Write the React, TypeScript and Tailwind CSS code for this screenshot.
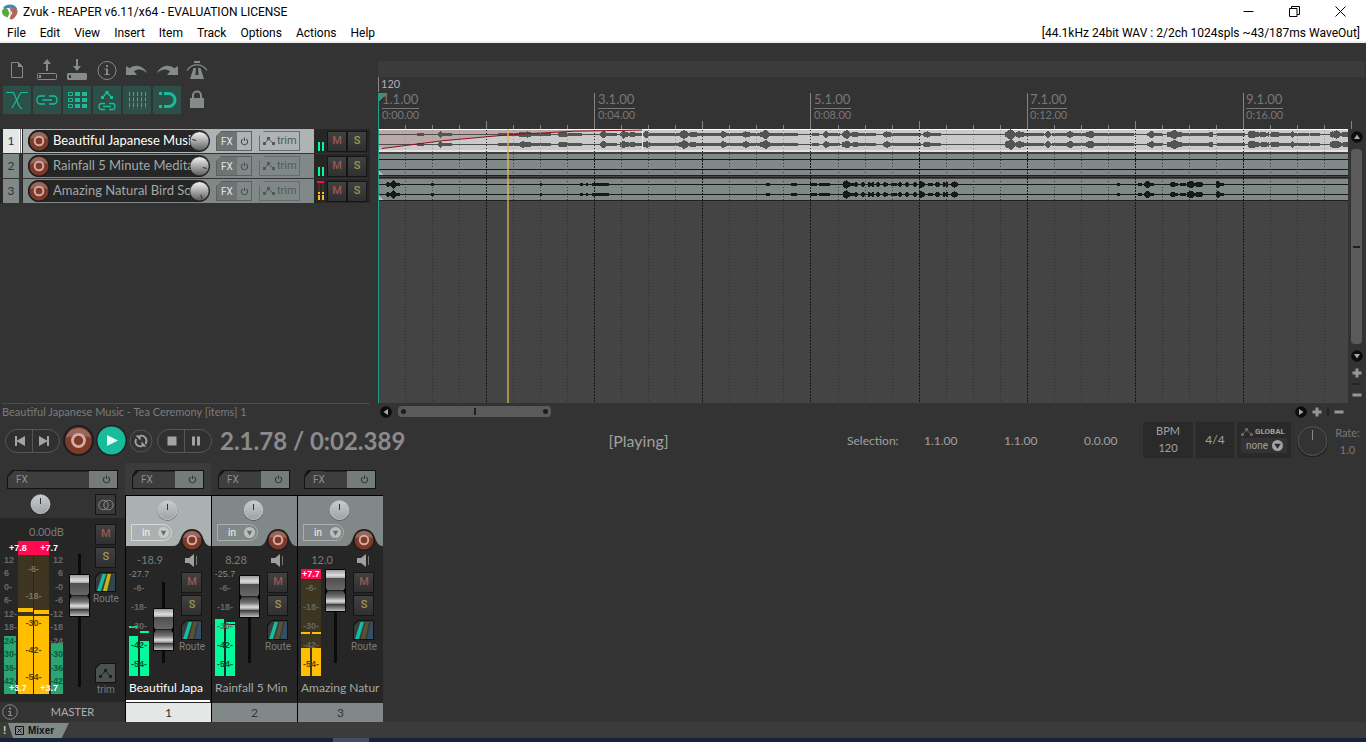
import { useState } from "react";
import type { ReactNode } from "react";

type Blob = [start: number, end: number, amp: number];

const MUSIC: Blob[] = [
  [417, 423, 1], [438, 442, 3], [442, 451, 1.5], [498, 517, 1.5], [518, 532, 3], [532, 550, 1],
  [558, 567, 3], [567, 581, 1], [600, 607, 3], [607, 616, 1.5], [620, 626, 4], [626, 634, 2],
  [634, 641, 1], [642, 650, 3], [650, 678, 1], [679, 688, 4], [688, 699, 2.5], [700, 719, 1.5],
  [720, 727, 3], [728, 741, 1], [742, 750, 3], [750, 759, 1.5], [760, 770, 4], [770, 797, 1.5],
  [812, 818, 1], [823, 829, 3], [829, 839, 1.5], [842, 850, 4], [850, 860, 2.5], [860, 875, 1],
  [883, 891, 3], [891, 920, 1], [923, 930, 3], [930, 940, 1.5], [1005, 1015, 5], [1015, 1025, 3],
  [1025, 1043, 1.5], [1045, 1050, 3], [1052, 1064, 1], [1065, 1074, 3], [1075, 1085, 1],
  [1086, 1094, 4], [1094, 1119, 1.5], [1120, 1133, 1], [1147, 1155, 3], [1155, 1162, 1],
  [1167, 1182, 4], [1182, 1208, 1.5], [1209, 1212, 2], [1217, 1244, 1], [1248, 1256, 4],
  [1256, 1268, 2], [1270, 1279, 3], [1279, 1289, 1.5], [1290, 1294, 3], [1294, 1308, 1],
  [1310, 1319, 1.5], [1330, 1340, 4], [1340, 1348, 2],
];

const BIRDS: Blob[] = [
  [386, 390, 2.5], [391, 396, 4], [396, 399, 1.5], [431, 433, 1.5], [540, 541, 1], [580, 582, 1],
  [586, 587, 1], [592, 597, 1.5], [598, 608, 1.5], [766, 769, 1.5], [791, 796, 1.5], [810, 816, 1.5],
  [819, 829, 1.5], [843, 850, 4], [851, 853, 1.5], [854, 857, 3], [861, 864, 2.5], [868, 873, 2],
  [876, 879, 3], [883, 887, 2.5], [891, 896, 1.5], [898, 901, 2.5], [905, 908, 2.5], [913, 916, 2.5],
  [919, 924, 3.5], [928, 932, 1.5], [935, 939, 3], [943, 947, 2], [951, 957, 3], [1117, 1119, 1],
  [1138, 1141, 1], [1144, 1150, 4], [1151, 1153, 1.5], [1170, 1177, 2.5], [1180, 1185, 1.5],
  [1187, 1194, 4], [1195, 1202, 3], [1216, 1220, 4], [1221, 1223, 1.5],
];

const ORIGIN = 378;

/** Builds one filled waveform; the amplitude swells and decays within each blob. */
function wave(blobs: Blob[], y: number, seed: number) {
  let d = "";
  for (const [a, b, amp] of blobs) {
    const n = b - a;
    for (let x = a; x <= b; x++) {
      const t = n ? (x - a) / n : 0.5;
      const env = amp >= 2.5 ? Math.max(0.35, Math.sin(Math.PI * (0.15 + 0.75 * t))) : 1;
      const noise = 0.65 + 0.3 * Math.abs(Math.sin(x * 12.9898 + seed));
      const h = Math.max(1, Math.round(amp * env * noise));
      d += `M${x - ORIGIN} ${y - h}h1v${h * 2 + 1}h-1z`;
    }
  }
  return d;
}

const LINES = Array.from({ length: 110 }, (_, i) => ({ i, x: Math.round(i * 27.03) }));

/* ---------- toolbar ---------- */

const tools: { label: string; on?: boolean; icon: ReactNode }[] = [
  { label: "New project", icon: (<><path d="M8.500 6.500h7l4 4v11h-11z" fill="none" stroke="currentColor" /><path d="M15 6l5 5h-5z" /></>) },
  { label: "Open project", icon: (<><path d="M14 3l4 5h-3v7h-2V8h-3z" /><rect x="4.500" y="17.500" width="19" height="6" rx="1" fill="none" stroke="currentColor" /><rect x="6" y="19" width="2" height="3" /></>) },
  { label: "Save project", icon: (<><path d="M14 15l4-5h-3V3h-2v7h-3z" /><path d="M5 17h18l1 1v5l-1 1H5l-1-1v-5zM6 19v3h2v-3z" fillRule="evenodd" /></>) },
  { label: "Project settings", icon: (<><circle cx="14" cy="14.500" r="9" fill="none" stroke="currentColor" /><path d="M13 9h2v2h-2zM11.500 12.500H15V18h2v1h-5.500v-1H13v-4.500h-1.500z" /></>) },
  { label: "Undo", icon: <path d="M3 10l3.500 2.200C12 8 20 9 24 17c-5-4-9.500-4.500-13-1.500L14 19H3z" /> },
  { label: "Redo", icon: <path d="M25 10l-3.500 2.200C16 8 8 9 4 17c5-4 9.500-4.500 13-1.500L14 19h11z" /> },
  { label: "Metronome", icon: (<><path d="M11 5h6v2h-6z" /><path d="M4 14.500C9 7 19 7 24 14.500" fill="none" stroke="currentColor" strokeWidth="1.300" /><path d="M10.500 12h2.500l-.5 7h3l-.5-7h2.500L21 23H7z" /></>) },
  { label: "Auto-crossfade", on: true, icon: <path d="M3 6.500h7c3 2 4 14 9 16.500M25 6.500h-7L9 22" fill="none" stroke="currentColor" strokeWidth="1.200" /> },
  { label: "Item grouping", on: true, icon: <path d="M12 10H7a3 4 0 0 0 0 8h5M16 10h5a3 4 0 0 1 0 8h-5M9 14h10" fill="none" stroke="currentColor" strokeWidth="1.400" /> },
  { label: "Ripple editing", on: true, icon: (<><path d="M5.500 6.500h4v3h-4zM5.500 12.500h4v3h-4zM5.500 18.500h4v3h-4z" fill="none" stroke="currentColor" /><path d="M12 6h5v4h-5zM19 6h5v4h-5zM12 12h5v4h-5zM19 12h5v4h-5zM12 18h5v4h-5zM19 18h5v4h-5z" /></>) },
  { label: "Envelope follow", on: true, icon: (<><path d="M9 12l5-5.500L19 12" fill="none" stroke="currentColor" strokeWidth="1.300" /><path d="M12.500 5h3v3h-3zM8 10h3v3H8zM17 10h3v3h-3z" /><path d="M12 17.500H8.500a2.500 3 0 0 0 0 6H12M16 17.500h3.500a2.500 3 0 0 1 0 6H16M10 20.500h8" fill="none" stroke="currentColor" strokeWidth="1.300" /></>) },
  { label: "Grid lines", on: true, icon: <path d="M6.500 6v17M10.500 6v17M14.500 6v17M18.500 6v17M22.500 6v17" fill="none" stroke="currentColor" strokeDasharray="4 1.500" /> },
  { label: "Snapping", on: true, icon: (<><path d="M6 6h3v3H6zM6 19h3v3H6z" /><path d="M11 7.500h4.500a6.500 6.500 0 0 1 0 13H11" fill="none" stroke="currentColor" strokeWidth="3" /></>) },
  { label: "Locking", icon: (<><path d="M7 12h14v10H7z" /><path d="M10 12V9.500a4 4 0 0 1 8 0V12" fill="none" stroke="currentColor" strokeWidth="2" /></>) },
];

function Toolbar() {
  return (
    <div className="grid w-fit grid-cols-7 gap-[2px] pt-[13px] pl-[3px]">
      {tools.map((t) => (
        <button key={t.label} aria-label={t.label} aria-pressed={!!t.on} className={t.on ? "size-[28px] bg-[#2c5047] text-[#18bc9a]" : "size-[28px] text-[#848b89]"}>
          <svg viewBox="0 0 28 28" className="size-full" fill="currentColor">{t.icon}</svg>
        </button>
      ))}
    </div>
  );
}

/* ---------- shared controls ---------- */

function PowerIcon() {
  return (
    <svg viewBox="0 0 10 10" className="size-[9px]" fill="none" stroke="currentColor" strokeWidth="1.200">
      <path d="M3 2.300a3.500 3.500 0 1 0 4 0M5 .5v4" />
    </svg>
  );
}

function EnvIcon() {
  return (
    <svg viewBox="0 0 12 8" className="h-[8px] w-[12px]" fill="currentColor">
      <path d="M1.500 6.500L5.500 2l5 4.500" fill="none" stroke="currentColor" />
      <path d="M0 5h3v3H0zM4 0h3v3H4zM9 5h3v3H9z" />
    </svg>
  );
}

function RecordButton({ size, label }: { size: string; label: string }) {
  return (
    <button aria-label={label} className={`${size} block shrink-0 rounded-full`}>
      <svg viewBox="0 0 22 22" className="size-full">
        <circle cx="11" cy="11" r="11" fill="#1d1d1d" />
        <circle cx="11" cy="11" r="9.500" fill="#7d3a2a" />
        <path d="M2 9a9.300 9.300 0 0 1 18 0Q11 6 2 9z" fill="#95685b" />
        <circle cx="11" cy="11" r="4.300" fill="none" stroke="#d0aca3" strokeWidth="2" />
      </svg>
    </button>
  );
}

function Knob({ label, angle, shiny, id }: { label: string; angle: number; shiny?: boolean; id: string }) {
  return (
    <label className="relative block size-[21px] shrink-0">
      <svg viewBox="0 0 21 21" className="size-full">
        <defs>
          <linearGradient id={id} x1="0" x2="0" y1="0" y2="1">
            <stop offset="0" stopColor={shiny ? "#f5f5f5" : "#c9cccc"} />
            <stop offset="1" stopColor={shiny ? "#5c5c5c" : "#9ea2a2"} />
          </linearGradient>
        </defs>
        <circle cx="10.500" cy="11" r="10" fill="#000" opacity=".35" />
        <circle cx="10.500" cy="10.200" r="9.500" fill={`url(#${id})`} stroke={shiny ? "#333" : "#cfd2d2"} strokeWidth=".7" />
        <path d={shiny ? "M10.500 7V3" : "M10.500 10V4"} stroke="#333" transform={`rotate(${angle} 10.500 10.500)`} />
      </svg>
      <input type="range" aria-label={label} className="absolute inset-0 size-full opacity-0" />
    </label>
  );
}

function MuteSolo({ kind, track, small }: { kind: "M" | "S"; track: string; small?: boolean }) {
  return (
    <button
      aria-label={`${kind === "M" ? "Mute" : "Solo"} ${track}`}
      className={`${small ? "h-[21px] w-[20px]" : "size-[21px]"} ${kind === "M" ? "text-[#9b5750]" : "text-[#9b9850]"} flex items-center justify-center border border-[#151515] bg-[#3a3a3a] bg-linear-to-b from-[#414141] to-[#303030] font-[Roboto,sans-serif] text-[11px] font-medium`}
    >
      {kind}
    </button>
  );
}

function MixerFx({ name }: { name: string }) {
  return (
    <div className="relative flex h-[19px] items-stretch">
      <svg className="absolute inset-0 size-full" preserveAspectRatio="none" viewBox="0 0 100 19">
        <path d="M0 19V6L5 0H100V19z" fill="#131313" />
      </svg>
      <button aria-label={`Effects for ${name}`} className="relative my-px ml-px flex-1 bg-[#3e3e3e] pl-[8px] text-left font-[Roboto,sans-serif] text-[10px] text-[#89908e] [clip-path:polygon(6px_0,100%_0,100%_100%,0_100%,0_6px)]">
        FX
        <i className="absolute top-0 right-0 left-[18px] h-px bg-[#262626]" />
      </button>
      <button aria-label={`Bypass effects for ${name}`} className="relative my-px mr-px flex w-[28px] items-center justify-center bg-[#737c7b] pl-[7px] text-[#2f3534]">
        <PowerIcon />
      </button>
    </div>
  );
}

function RouteButton({ name, bright }: { name: string; bright?: boolean }) {
  return (
    <button aria-label={`Routing for ${name}`} className="flex flex-col items-center">
      <svg viewBox="0 0 21 20" className="h-[20px] w-[21px]">
        <path d="M0 20V5l5-5h16v20z" fill="#111" />
        <path d="M1 19V5.500L5.500 1H20v18z" fill="#373c3c" />
        <path d="M2 19L7.500 2h3.500L6 19z" fill="#17bda0" />
        <path d="M8 19L12.500 2H16l-4 17z" fill={bright ? "#c7b414" : "#5a5233"} />
        <path d="M14 19l4-17h2v17z" fill={bright ? "#2e4650" : "#345064"} />
      </svg>
      <span className="font-[Roboto,sans-serif] text-[10px] leading-[14px] text-[#7c7c7c]">Route</span>
    </button>
  );
}

function FaderCap({ id }: { id: string }) {
  return (
    <svg viewBox="0 0 21 43" className="h-[43px] w-[21px]">
      <defs>
        <linearGradient id={`${id}a`} x1="0" x2="0" y1="0" y2="1">
          <stop offset="0" stopColor="#999" /><stop offset=".25" stopColor="#ddd" /><stop offset=".36" stopColor="#b0b0b0" />
          <stop offset=".4" stopColor="#505050" /><stop offset="1" stopColor="#6a6a6a" />
        </linearGradient>
        <linearGradient id={`${id}b`} x1="0" x2="0" y1="0" y2="1">
          <stop offset="0" stopColor="#3f3f3f" /><stop offset=".3" stopColor="#777" /><stop offset=".5" stopColor="#dedede" />
          <stop offset=".62" stopColor="#999" /><stop offset=".66" stopColor="#3a3a3a" /><stop offset="1" stopColor="#bbb" />
        </linearGradient>
      </defs>
      <rect width="21" height="43" rx="1.500" fill="#050505" />
      <path d="M1 1h19v18l-2 3H3l-2-3z" fill={`url(#${id}a)`} />
      <path d="M1 25l2-3h15l2 3v17H1z" fill={`url(#${id}b)`} />
      <path d="M2 21.500h17" stroke="#222" />
    </svg>
  );
}

function Fader({ name, top, lineTop, lineHeight, id }: { name: string; top: number; lineTop: number; lineHeight: number; id: string }) {
  return (
    <label className="relative block w-[21px] self-stretch">
      <i className="absolute left-[9px] w-[3px] bg-[#0b0b0b]" style={{ top: lineTop, height: lineHeight }} />
      <span className="absolute left-0" style={{ top }}><FaderCap id={id} /></span>
      <input type="range" aria-label={`Volume of ${name}`} className="absolute inset-0 size-full opacity-0" />
    </label>
  );
}

/* ---------- track control panel ---------- */

const tracks = [
  { name: "Beautiful Japanese Musi", short: "Beautiful Japa", volume: "-18.9", peak: "-27.7", fader: 40, knob: 285, bars: [68, 73], holds: [58, 63], clip: false },
  { name: "Rainfall 5 Minute Medita", short: "Rainfall 5 Min", volume: "8.28", peak: "-25.7", fader: 7, knob: 105, bars: [51, 57], holds: [51, 54], clip: false },
  { name: "Amazing Natural Bird So", short: "Amazing Natur", volume: "12.0", peak: "+7.7", fader: 1, knob: 160, bars: [80, 80], holds: [64, 64], clip: true },
];

function TrackRow({ index, selected, onSelect }: { index: number; selected: boolean; onSelect: () => void }) {
  const t = tracks[index];
  return (
    <div className="flex h-[24px] w-[370px] bg-[#262626] pl-[3px]">
      <button onClick={onSelect} aria-label={`Select track ${index + 1}`} className={`${selected ? "bg-[#e5e7e6]" : "bg-[#808987]"} w-[16px] text-[12px] text-[#333]`}>{index + 1}</button>
      <span className={`${selected ? "border-white bg-[#777]" : "border-[#333] bg-[#333]"} mr-px w-[3px] border-r border-l`} />
      <div className={`${selected ? "bg-[#aeb4b3]" : "bg-[#808987]"} flex w-[291px] items-center`}>
        <div className="ml-[5px] flex h-[22px] w-[182px] items-center rounded-full bg-[#262626]">
          <RecordButton size="size-[22px]" label={`Arm ${t.name}`} />
          <span className={`${selected ? "text-white" : "text-[#a2a8a7]"} ml-[3px] w-[136px] text-[13px] whitespace-nowrap`}>{t.name}</span>
          <Knob id={`tk${index}`} label={`Pan of ${t.name}`} angle={t.knob} shiny />
        </div>
        <div className="ml-[6px] flex h-[20px] w-[36px] border border-[#5b6160] [clip-path:polygon(5px_0,100%_0,100%_100%,0_100%,0_5px)]">
          <button aria-label={`Effects for ${t.name}`} className="w-[20px] bg-[#6e7473] font-[Roboto,sans-serif] text-[10px] text-[#e0e3e2]">FX</button>
          <button aria-label={`Bypass effects for ${t.name}`} className="flex flex-1 items-center justify-center text-[#484e4d]"><PowerIcon /></button>
        </div>
        <button className="ml-[7px] flex h-[20px] w-[41px] items-center gap-[2px] border border-[#676d6c] pl-[3px] font-[Roboto,sans-serif] text-[11px] text-[#535958] [clip-path:polygon(5px_0,100%_0,100%_100%,0_100%,0_5px)]">
          <EnvIcon />trim
        </button>
      </div>
      <svg viewBox="0 0 12 24" className="h-[24px] w-[12px]">
        {t.clip ? (
          <>
            <path d="M3 2h7v2H3z" fill="#ff0a50" /><path d="M4 4h2v9H4zM8 4h2v9H8z" fill="#3d3520" />
            <path d="M4 13h2v8H4zM8 13h2v8H8z" fill="#ffbe08" /><path d="M3 15h7v1H3z" fill="#262626" />
          </>
        ) : <path d="M4 13h2v9H4zM8 13h2v9H8z" fill="#00fb98" />}
      </svg>
      <div className="flex items-center pl-px">
        <MuteSolo kind="M" track={t.name} small />
        <MuteSolo kind="S" track={t.name} small />
      </div>
    </div>
  );
}

/* ---------- arrange view ---------- */

function Ruler() {
  const marks = ["1.1.00", "3.1.00", "5.1.00", "7.1.00", "9.1.00"];
  const times = ["0:00.00", "0:04.00", "0:08.00", "0:12.00", "0:16.00"];
  return (
    <div className="relative h-[52px] overflow-hidden">
      <svg className="absolute inset-0 size-full" shapeRendering="crispEdges">
        {LINES.map(({ i, x }) => (
          <rect key={i} x={x} y={i % 8 === 0 ? 16 : i % 4 === 0 ? 44 : 48} width="1" height="36" fill="#858585" />
        ))}
        <rect width="1" height="15" fill="#858585" />
        <path d="M0 16h9L0 25z" fill="#3e8f80" />
        <rect y="16" width="1" height="36" fill="#1f9f87" />
      </svg>
      <div className="relative pl-[3px] text-[11px] leading-[14px] text-[#b0b0b0]">120</div>
      <div className="relative flex">
        {marks.map((m, i) => (
          <div key={m} className="w-[216px] shrink-0 pl-[4px] text-[#777]">
            <div className="w-[37px] border-b border-[#777] text-[13px] leading-[17px]">{m}</div>
            <div className="text-[11px] leading-[12px]">{times[i]}</div>
          </div>
        ))}
      </div>
    </div>
  );
}

function Lanes() {
  return (
    <svg className="size-full" shapeRendering="crispEdges">
      <rect width="100%" height="23" fill="#c9cac9" />
      <rect width="100%" height="1" fill="#fff" />
      <rect y="21" width="100%" height="2" fill="#e2e2e2" />
      <rect y="23" width="100%" height="2" fill="#453f42" />
      <rect y="25" width="100%" height="21" fill="#808987" />
      <rect y="46" width="100%" height="1" fill="#202020" />
      <rect y="48" width="100%" height="1" fill="#202020" />
      <rect y="50" width="100%" height="21" fill="#808987" />
      <rect y="71" width="100%" height="1" fill="#202020" />
      <path d="M0 1V20Q130 1 264 1z" fill="#a87b7b" opacity=".42" shapeRendering="auto" />
      <rect y="5" width="100%" height="1" fill="#4e4e4e" />
      <rect y="15" width="100%" height="1" fill="#4e4e4e" />
      <path d={wave(MUSIC, 5, 1)} fill="#545454" />
      <path d={wave(MUSIC, 15, 7)} fill="#545454" />
      {[30, 40, 55, 65].map((y) => <rect key={y} y={y} width="100%" height="1" fill="#151a19" />)}
      <path d={wave(BIRDS, 55, 2)} fill="#151a19" />
      <path d={wave(BIRDS, 65, 2)} fill="#151a19" />
      {LINES.map(({ i, x }) => (
        <line key={i} x1={x + 0.5} x2={x + 0.5} y1="25" y2="100%" stroke={i % 4 === 0 ? "#151515" : "#262626"} strokeOpacity={i % 4 === 0 ? 1 : 0.75} strokeDasharray={i % 4 === 0 ? "2 1" : "1 2"} />
      ))}
      {LINES.map(({ i, x }) => (
        <line key={i} x1={x + 0.5} x2={x + 0.5} y1="1" y2="23" stroke={i % 4 === 0 ? "#222" : "#999"} strokeDasharray="1 2" />
      ))}
      <path d="M0 20Q130 1 264 1" fill="none" stroke="#8c1016" shapeRendering="auto" />
      <path d="M264.500 2v19" stroke="#e8e8e8" />
      <path d="M0 41l5 5H0zM0 66l5 5H0zM0 16l5 5H0z" fill="#b4bab8" />
      <rect x="129" width="2" height="100%" fill="#e0b94a" opacity=".65" />
      <rect width="1" height="100%" fill="#1f9f87" />
    </svg>
  );
}

function ScrollArrow({ d, label }: { d: string; label: string }) {
  return (
    <button aria-label={label} className="size-[12px] shrink-0">
      <svg viewBox="0 0 12 12" className="size-full"><circle cx="6" cy="6" r="5.800" fill="#0c0c0c" /><path d={d} fill="#aaa" /></svg>
    </button>
  );
}

function Zoom({ plus, label }: { plus?: boolean; label: string }) {
  return (
    <button aria-label={label} className="size-[10px] shrink-0">
      <svg viewBox="0 0 10 10" className="size-full" fill="#969696"><path d="M.5 3.500h9v3h-9z" />{plus && <path d="M3.500.5h3v9h-3z" />}</svg>
    </button>
  );
}

function Arrange() {
  return (
    <section className="flex min-w-0 flex-1 flex-col pt-[18px]">
      <div className="mr-px h-[16px] bg-[#3b3b3b]" />
      <Ruler />
      <div className="flex min-h-[240px] flex-1">
        <div className="relative min-w-0 flex-1 bg-[#444]">
          <div className="absolute inset-0"><Lanes /></div>
        </div>
        <div className="flex w-[18px] flex-col items-center pt-[2px] pr-px">
          <ScrollArrow label="Scroll up" d="M6 3.500l3 4.500H3z" />
          <div className="my-[6px] flex w-[11px] flex-1 items-center justify-center rounded-[4px] bg-[#5a5a5a]"><i className="h-[2px] w-[7px] bg-[#1f1f1f]" /></div>
          <ScrollArrow label="Scroll down" d="M6 8.500l3-4.500H3z" />
          <div className="mt-[6px] flex flex-col items-center gap-[5px] pb-[3px]">
            <Zoom plus label="Zoom in vertically" />
            <i className="h-[2px] w-[9px] bg-[#252525]" />
            <Zoom label="Zoom out vertically" />
          </div>
        </div>
      </div>
      <div className="flex h-[17px] items-center pr-[22px] pl-[2px]">
        <ScrollArrow label="Scroll left" d="M3.500 6L8 3v6z" />
        <div className="ml-[6px] flex h-[11px] w-[153px] items-center justify-between rounded-[4px] bg-[#5a5a5a] px-[3px]">
          <i className="size-[5px] rounded-full bg-[#1c1c1c]" /><i className="h-[7px] w-[2px] bg-[#1f1f1f]" /><i className="size-[5px] rounded-full bg-[#1c1c1c]" />
        </div>
        <div className="ml-auto flex items-center gap-[5px]">
          <ScrollArrow label="Scroll right" d="M8.500 6L4 3v6z" />
          <Zoom plus label="Zoom in" />
          <i className="h-[9px] w-[2px] bg-[#252525]" />
          <Zoom label="Zoom out" />
        </div>
      </div>
    </section>
  );
}

/* ---------- transport ---------- */

function TransportPair({ side, buttons }: { side: string; buttons: { label: string; d: string }[] }) {
  return (
    <div className={`${side} flex h-[24px] w-[55px] overflow-hidden rounded-full border border-[#565656] bg-[#303030]`}>
      {buttons.map((b, i) => (
        <button key={b.label} aria-label={b.label} className={`${i ? "border-l border-[#565656] pr-[3px]" : "pl-[2px]"} flex flex-1 items-center justify-center`}>
          <svg viewBox="0 0 12 12" className="size-[12px]" fill="#a3a3a3"><path d={b.d} /></svg>
        </button>
      ))}
    </div>
  );
}

function Transport() {
  return (
    <section className="flex h-[43px] items-start pt-[2px] pr-[3px] pl-[5px] text-[#a0a0a0]">
      <div className="flex h-[37px] shrink-0 items-center">
        <TransportPair side="" buttons={[{ label: "Go to start", d: "M1 1h2v4.500L11 1v10L3 6.500V11H1z" }, { label: "Go to end", d: "M11 1H9v4.500L1 1v10l8-4.500V11h2z" }]} />
        <div className="ml-[3px]"><RecordButton size="size-[31px]" label="Record" /></div>
        <button aria-label="Play" className="ml-[2px] size-[31px]">
          <svg viewBox="0 0 31 31" className="size-full"><circle cx="15.500" cy="15.500" r="15.500" fill="#222" /><circle cx="15.500" cy="15.500" r="14" fill="#18bc9a" /><path d="M11 10l11 5.500L11 21z" fill="#e6faf5" /></svg>
        </button>
        <button aria-label="Repeat" className="ml-[2px] size-[24px]">
          <svg viewBox="0 0 24 24" className="size-full" fill="none" stroke="#a3a3a3">
            <circle cx="12" cy="12" r="11" stroke="#565656" />
            <path d="M8.500 16.500a5.300 5.300 0 0 1-1.300-6.500M11 6.800a5.300 5.300 0 0 1 5.500 8.200M13 17.200a5.300 5.300 0 0 1-4.500-.7" strokeWidth="1.800" />
            <path d="M6.500 6.500h5v5zM17.500 17.500h-5v-5z" fill="#a3a3a3" stroke="none" />
          </svg>
        </button>
        <TransportPair side="ml-[4px]" buttons={[{ label: "Stop", d: "M1.500 1.500h9v9h-9z" }, { label: "Pause", d: "M2 1.500h3v9H2zM7 1.500h3v9H7z" }]} />
        <output className="ml-[8px] w-[184px] text-[24px] font-bold whitespace-nowrap text-[#8b8b8b]">2.1.78 / 0:02.389</output>
      </div>
      <div className="flex h-[37px] flex-1 items-center justify-center pl-[26px] text-[16px]">[Playing]</div>
      <div className="flex h-[37px] shrink-0 items-center text-[12px]">
        <span className="w-[77px]">Selection:</span>
        <span className="w-[80px]">1.1.00</span>
        <span className="w-[80px]">1.1.00</span>
        <span className="w-[59px]">0.0.00</span>
      </div>
      <div className="flex shrink-0 items-center text-[11px]">
        <div className="flex h-[36px] w-[50px] flex-col items-center justify-between bg-[#2a2a2a] pb-[2px] leading-[17px]"><span>BPM</span><span>120</span></div>
        <div className="ml-[3px] flex h-[36px] w-[38px] items-center justify-center bg-[#2a2a2a] text-[12px]">4/4</div>
        <div className="ml-[3px] flex h-[36px] w-[54px] flex-col bg-[#2a2a2a] px-[4px] pt-[4px]">
          <span className="flex items-center gap-[2px] font-[Roboto,sans-serif] text-[8px] leading-[11px] font-bold"><span className="text-[#666]"><EnvIcon /></span>GLOBAL</span>
          <label className="relative mt-px block bg-[#333]">
            <select aria-label="Global automation override" className="block h-[15px] w-full appearance-none pl-[5px] font-[Roboto,sans-serif] text-[10px]"><option>none</option></select>
            <svg viewBox="0 0 10 10" className="pointer-events-none absolute top-[2px] right-[4px] size-[11px]"><circle cx="5" cy="5" r="5" fill="#a3a3a3" /><path d="M2 3.500h6L5 8z" fill="#2a2a2a" /></svg>
          </label>
        </div>
        <label className="relative ml-[5px] size-[33px]">
          <svg viewBox="0 0 33 33" className="size-full" fill="none"><circle cx="16.500" cy="18" r="14.500" stroke="#222" strokeWidth="2" /><circle cx="16.500" cy="17" r="14.500" fill="#333" stroke="#555" /><path d="M16.500 6v10" stroke="#888" /></svg>
          <input type="range" aria-label="Play rate" className="absolute inset-0 size-full opacity-0" />
        </label>
        <div className="ml-[3px] flex h-[36px] w-[31px] flex-col items-center justify-between pt-[2px] leading-[17px] text-[#777]"><span>Rate:</span><span>1.0</span></div>
      </div>
    </section>
  );
}

/* ---------- mixer ---------- */

const METER_FONT = "font-['Liberation_Sans',sans-serif] font-bold";

function Meter({ t }: { t: (typeof tracks)[number] }) {
  const lit = t.clip ? "bg-[#ffbe00]" : "bg-[#00fb98]";
  return (
    <div className="relative ml-[3px] h-[108px] w-[20px]">
      {t.clip && <i className="absolute inset-x-0 top-[12px] bottom-0 bg-[#3d3520]" />}
      {[0, 1].map((i) => (
        <span key={i}>
          <i className={`${lit} ${i ? "right-0" : "left-0"} absolute bottom-0 w-[9px]`} style={{ top: t.bars[i] }} />
          <i className={`${lit} ${i ? "right-0" : "left-0"} absolute h-[2px] w-[9px]`} style={{ top: t.holds[i] }} />
        </span>
      ))}
      <div className={`${METER_FONT} absolute -inset-x-[4px] top-px flex flex-col items-center text-[9px] text-[#666]`}>
        <span className={`${t.clip ? "bg-[#ff0a50] text-white" : "font-normal text-[#858585]"} h-[10px] w-[20px] text-center leading-[10px]`}><span className="-mx-[4px]">{t.peak}</span></span>
        {[6, 18, 30, 42, 54].map((n) => (
          <span key={n} className={`${n > 40 && !(t.clip && n === 42) ? (t.clip ? "text-[#5e4500]" : "text-[#05503a]") : ""} h-[19px] leading-[19px]`}>-{n}-</span>
        ))}
      </div>
    </div>
  );
}

function Strip({ index, selected }: { index: number; selected: boolean }) {
  const t = tracks[index];
  const tint = selected ? "bg-[#abb1b0]" : "bg-[#808987]";
  return (
    <div className="w-[86px] shrink-0">
      <div className={`${selected ? "bg-[#3b3b3b]" : ""} h-[32px] pt-[7px] pr-[7px] pl-[7px]`}><MixerFx name={t.name} /></div>
      <div className="border-l border-black">
        <div className={`${tint} relative h-[51px] border-t border-black pt-[4px]`}>
          <div className="ml-[31px]"><Knob id={`mk${index}`} label={`Mixer pan of ${t.name}`} angle={0} /></div>
          <label className="relative mt-[3px] ml-[5px] block w-[41px]">
            <select aria-label={`Input of ${t.name}`} className={`${selected ? "border-[#d5d8d7]" : "border-[#a9afae]"} block h-[17px] w-full appearance-none rounded-r-full border pl-[10px] font-[Roboto,sans-serif] text-[10px] text-[#f4f4f4]`}><option>in</option></select>
            <svg viewBox="0 0 10 10" className="pointer-events-none absolute top-[3px] right-[3px] size-[11px]"><circle cx="5" cy="5" r="5" fill="#d2d5d4" opacity=".7" /><path d="M2.500 3.500h5L5 8z" fill="#666c6b" /></svg>
          </label>
          <svg viewBox="0 0 38 20" className="absolute right-0 bottom-0 h-[20px] w-[38px]"><path d="M0 20q5 0 7-6a12.500 12.500 0 0 1 24 0q2 6 7 6z" fill="#262626" /></svg>
          <div className="absolute right-[8px] -bottom-[5px]"><RecordButton size="size-[22px]" label={`Arm ${t.name} in mixer`} /></div>
        </div>
        <div className="flex h-[156px] flex-col bg-[#262626]">
          <div className="flex h-[132px]">
            <div>
              <div className="h-[22px] w-[48px] pt-[3px] text-center text-[11px] leading-[21px] text-[#7a7a7a]">{t.volume}</div>
              <div className="flex h-[108px] gap-[4px]">
                <Meter t={t} />
                <Fader name={t.name} top={t.fader} lineTop={14} lineHeight={81} id={`f${index}`} />
              </div>
            </div>
            <div className="ml-[5px] flex flex-col items-center pt-[8px]">
              <svg viewBox="0 0 13 13" className="h-[13px] w-[13px]" fill="#a0a0a0"><path d="M0 4h4l5-4v13L4 9H0z" /><path d="M11.500 2v9" stroke="#777" /></svg>
              <div className="mt-[5px]"><MuteSolo kind="M" track={`${t.name} strip`} /></div>
              <div className="mt-[2px] mb-[4px]"><MuteSolo kind="S" track={`${t.name} strip`} /></div>
              <RouteButton name={t.name} />
            </div>
          </div>
          <div className={`${selected ? "text-white" : "text-[#a2a8a7]"} ml-[3px] h-[22px] text-[12px] leading-[20px] whitespace-nowrap`}>{t.short}</div>
          <div className={`${selected ? "bg-white" : ""} mr-px h-[2px] shrink-0`} />
        </div>
        <div className={`${selected ? "bg-[#e5e7e6]" : "bg-[#808987]"} h-[20px] border-t border-[#262626] text-center text-[12px] leading-[20px] text-[#333]`}>{index + 1}</div>
      </div>
    </div>
  );
}

function Scale({ right }: { right?: boolean }) {
  const left = ["12", "6", "0-", "6-", "12-", "18-", "24-", "30-", "36-", "42-"];
  const labels = right ? ["12", "6", "-0", "-6", "-12", "-18", "-24", "-30", "-36", "-42"] : left;
  return (
    <div className={`${METER_FONT} ${right ? "right-0 items-end" : "left-0 items-start"} absolute top-[14px] flex h-[131px] flex-col justify-between text-[9px] leading-[10px] text-[#686868]`}>
      {labels.map((l, i) => <span key={l} className={i > (right ? 6 : 5) ? "text-[#0d5a3e]" : ""}>{l}</span>)}
    </div>
  );
}

function Master() {
  return (
    <div className="w-[125px] shrink-0">
      <div className="h-[55px] pt-[7px] pl-[7px]">
        <div className="w-[111px]"><MixerFx name="master" /></div>
        <div className="mt-[5px] flex items-center justify-between pr-[9px] pl-[23px]">
          <Knob id="mmk" label="Master pan" angle={0} />
          <button aria-label="Mono" className="flex size-[21px] items-center justify-center border border-[#151515] bg-[#3a3a3a]">
            <svg viewBox="0 0 16 12" className="h-[12px] w-[16px]" fill="none" stroke="#8a8a8a"><circle cx="5.500" cy="6" r="4.700" /><circle cx="10.500" cy="6" r="4.700" /></svg>
          </button>
        </div>
      </div>
      <div className="flex h-[184px] bg-[#262626]">
        <div className="ml-[4px]">
          <div className="h-[23px] pt-[3px] pl-[25px] text-[11px] leading-[21px] text-[#7a7a7a]">0.00dB</div>
          <div className="relative h-[153px] w-[59px]">
            <i className="absolute top-[95px] bottom-0 left-0 w-[12px] bg-[#2ba673]" />
            <i className="absolute top-[102px] right-0 bottom-0 w-[12px] bg-[#2ba673]" />
            <i className="absolute top-0 bottom-0 left-[14px] w-[31px] bg-[#3d3520]" />
            <i className="absolute top-0 left-[14px] h-[14px] w-[31px] bg-[#ff0a50]" />
            <i className="absolute top-[67px] left-[14px] h-[4px] w-[15px] bg-[#ffbe00]" />
            <i className="absolute top-[69px] left-[30px] h-[4px] w-[15px] bg-[#ffbe00]" />
            <i className="absolute top-[75px] bottom-0 left-[14px] w-[31px] bg-[#ffbe00]" />
            <i className="absolute top-[14px] bottom-0 left-[29px] w-px bg-[#262626]" />
            <Scale /><Scale right />
            <div className={`${METER_FONT} absolute top-[15px] left-[14px] flex w-[31px] flex-col items-center text-[9px] leading-[27px] text-[#7d745b]`}>
              <span>-6-</span><span>-18-</span><span className="text-[#5e4500]">-30-</span><span className="text-[#5e4500]">-42-</span><span className="text-[#5e4500]">-54-</span>
            </div>
            <div className={`${METER_FONT} absolute top-px left-[5px] flex w-[49px] justify-between text-[9px] leading-[12px] text-white`}><span>+7.8</span><span>+7.7</span></div>
            <div className={`${METER_FONT} absolute bottom-0 left-[5px] flex w-[49px] justify-between text-[9px] leading-[12px] text-white`}><span>+3.7</span><span>+3.7</span></div>
          </div>
        </div>
        <div className="ml-[5px] flex"><Fader name="master" top={56} lineTop={36} lineHeight={133} id="mf" /></div>
        <div className="ml-[3px] flex flex-1 flex-col items-center pt-[6px] pr-[7px]">
          <MuteSolo kind="M" track="master" />
          <div className="mt-[2px] mb-[4px]"><MuteSolo kind="S" track="master" /></div>
          <RouteButton name="master" bright />
          <button className="mt-auto flex flex-col items-center pb-[6px] font-[Roboto,sans-serif] text-[10px] leading-[13px] text-[#7c7c7c]">
            <svg viewBox="0 0 21 20" className="h-[20px] w-[21px]"><path d="M0 20V5l5-5h16v20z" fill="#111" /><path d="M1 19V5.500L5.500 1H20v18z" fill="#4b5050" /><path d="M5.500 13l5-5 5 5" stroke="#1f1f1f" fill="none" /><path d="M4 12h3v3H4zM9 6h3v3H9zM14 12h3v3h-3z" fill="#1f1f1f" /></svg>
            trim
          </button>
        </div>
      </div>
      <div className="flex h-[20px] items-center pl-[2px] text-[11px] text-[#b0b0b0]">
        <svg viewBox="0 0 16 16" className="size-[16px]" fill="#858585"><circle cx="8" cy="8" r="7.300" fill="none" stroke="#858585" /><path d="M7 3.500h2v2H7zM6 7h3v4h1.500v1H6v-1h1.500V8H6z" /></svg>
        <span className="flex-1 pl-[2px] text-center">MASTER</span>
      </div>
    </div>
  );
}

/* ---------- window ---------- */

const menus = ["File", "Edit", "View", "Insert", "Item", "Track", "Options", "Actions", "Help"];

export default function App() {
  const [selected, setSelected] = useState(0);
  return (
    <div className="flex min-h-screen flex-col overflow-hidden bg-[#333] font-[Lato,'Noto_Sans',sans-serif]">
      <header className="border-b-2 border-[#efefef] bg-white font-[Roboto,'Noto_Sans',sans-serif] text-[12px] text-black">
        <div className="flex h-[23px] items-center pl-[2px]">
          <svg viewBox="0 0 16 16" className="size-[16px]">
            <path d="M1 4Q3 .5 8 .5t7 4l-1 2Q11 3 7 4L2.500 5z" fill="#3f88b8" /><path d="M0 6.500Q2 3.500 5.500 4.500l2 5-2 4Q-.5 12 0 6.500z" fill="#5ba83b" /><path d="M7 4.500q5-1.500 8.500 1.500.5 6-5.500 9.500l-2.500-.5q3-5-.5-10.500z" fill="#b3655a" /><path d="M5 4.500q4 .5 5 6" fill="none" stroke="#fff" />
          </svg>
          <h1 className="ml-[5px]">Zvuk - REAPER v6.11/x64 - EVALUATION LICENSE</h1>
          <div className="ml-auto flex gap-[35px] pr-[20px]">
            <button aria-label="Minimize"><svg viewBox="0 0 11 11" className="size-[11px]" stroke="#000"><path d="M.5 5.500h10" /></svg></button>
            <button aria-label="Restore"><svg viewBox="0 0 11 11" className="size-[11px]" stroke="#000" fill="none"><path d="M.5 2.500h7.500v8H.5zM2.500 2.500v-2h8v8H8" /></svg></button>
            <button aria-label="Close"><svg viewBox="0 0 11 11" className="size-[11px]" stroke="#000"><path d="M.5.5l10 10M10.500.5l-10 10" /></svg></button>
          </div>
        </div>
        <div className="flex h-[18px] items-center justify-between pt-px pr-[6px] pl-[7px]">
          <nav className="flex gap-[14px]">{menus.map((m) => <button key={m}>{m}</button>)}</nav>
          <span>[44.1kHz 24bit WAV : 2/2ch 1024spls ~43/187ms WaveOut]</span>
        </div>
      </header>

      <main className="flex flex-1">
        <section className="flex w-[378px] shrink-0 flex-col">
          <Toolbar />
          <div className="mt-[15px] flex flex-col gap-px">
            {tracks.map((t, i) => <TrackRow key={t.name} index={i} selected={i === selected} onSelect={() => setSelected(i)} />)}
          </div>
          <div className="mt-auto mr-[8px] ml-[2px] border-t border-[#4c4c4c] pb-px text-[11px] leading-[15px] text-[#7c7c7c]">Beautiful Japanese Music - Tea Ceremony [items] 1</div>
        </section>
        <Arrange />
      </main>

      <Transport />

      <section className="flex">
        <Master />
        {tracks.map((t, i) => <Strip key={t.name} index={i} selected={i === selected} />)}
      </section>

      <footer>
        <div className="flex h-[16px] items-end bg-[#3b3b3b] font-['Liberation_Sans',sans-serif] text-[10px] leading-[15px] font-bold">
          <span className="w-[8px] pl-[3px] text-[#d8d8a0]">!</span>
          <button className="flex h-[15px] w-[61px] items-center gap-[4px] bg-[#808987] pl-[7px] text-[#111] [clip-path:polygon(0_0,100%_0,88%_100%,8%_100%)]">
            <svg viewBox="0 0 9 9" className="size-[9px]" fill="none" stroke="#111"><path d="M.5.5h8v8h-8zM2.500 2.500l4 4M6.500 2.500l-4 4" /></svg>Mixer
          </button>
        </div>
        <div className="h-[4px] bg-[#15233c] pl-[333px]"><div className="h-full w-[36px] bg-[#434e63]" /></div>
      </footer>
    </div>
  );
}
